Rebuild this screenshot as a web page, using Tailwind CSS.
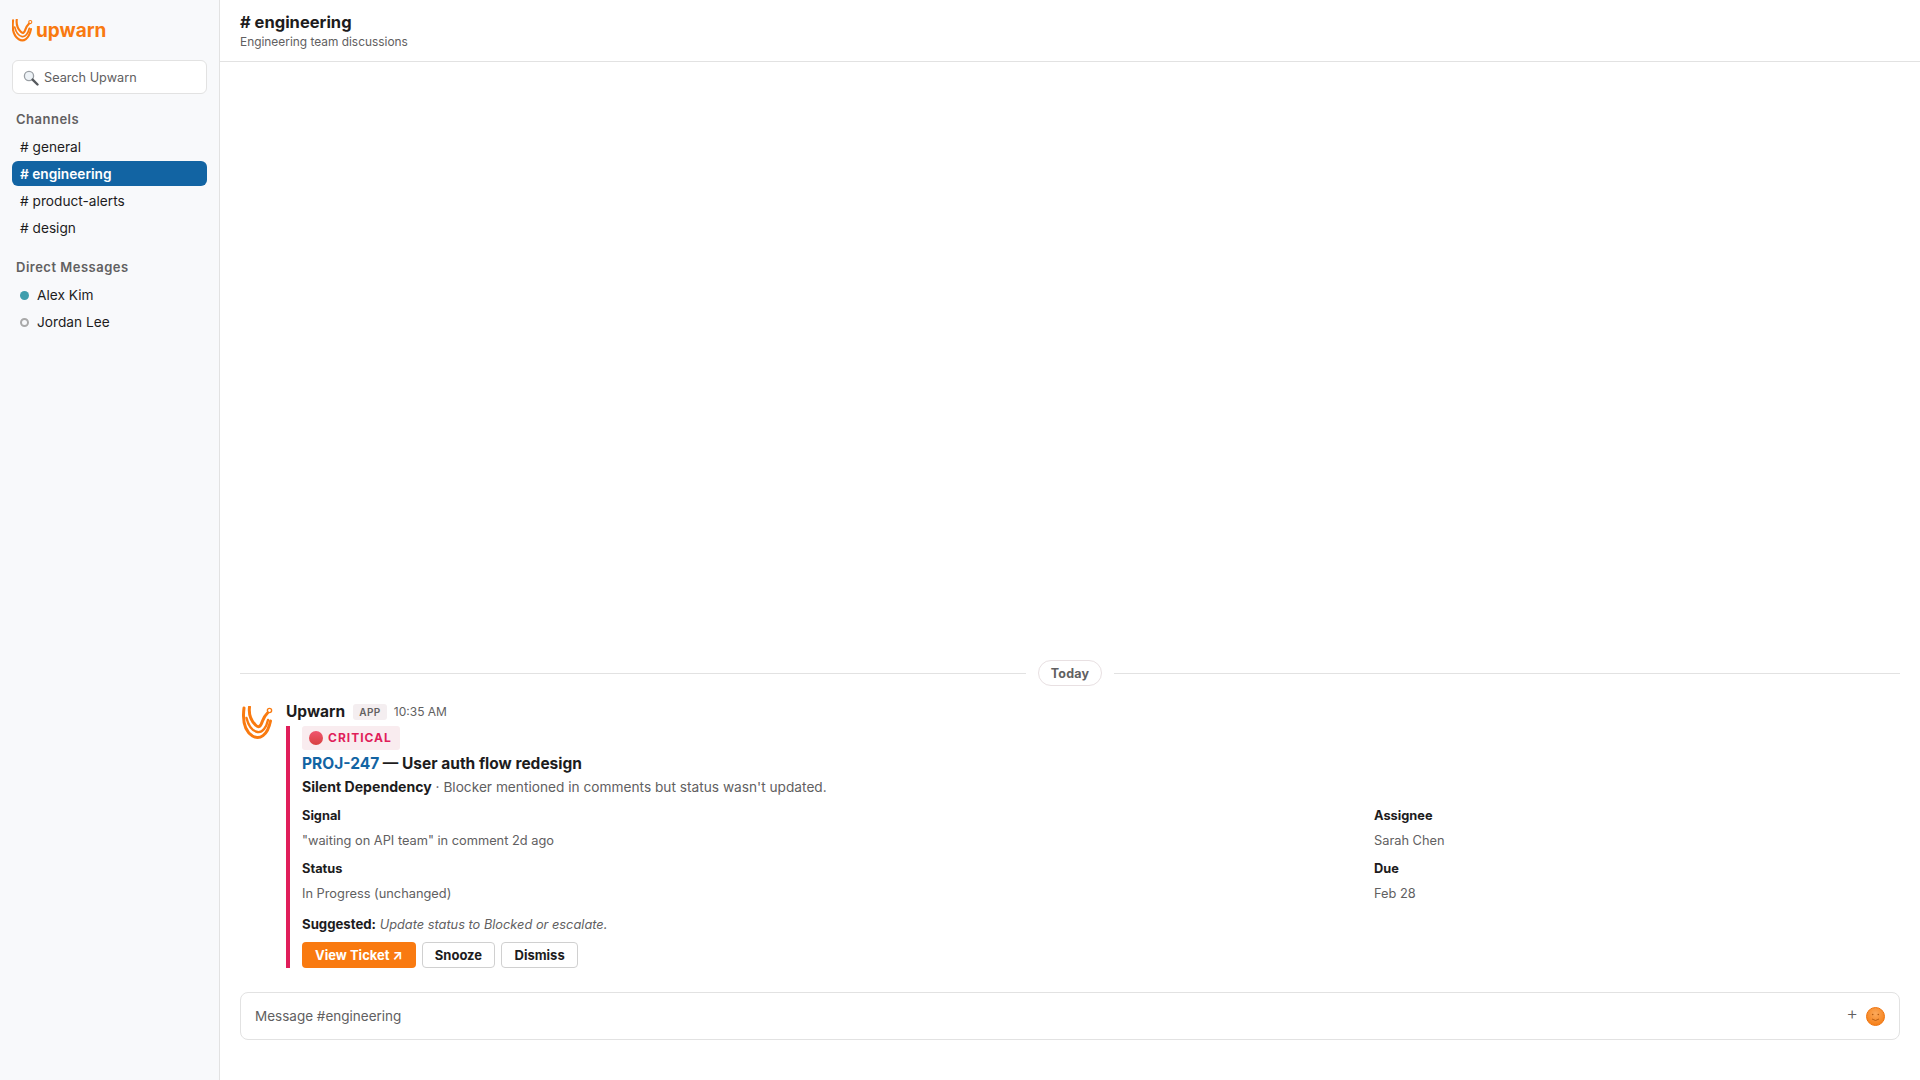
<!DOCTYPE html>
<html lang="en">
<head>
  <meta charset="UTF-8" />
  <title>Upwarn</title>
  <script src="https://cdn.jsdelivr.net/npm/@tailwindcss/browser@4"></script>
</head>
<body class="font-['Inter',sans-serif] bg-white text-[#1d1c1d]">
  <div class="flex h-[1080px] w-[1920px] overflow-hidden">

    <!-- sidebar -->
    <aside class="w-[220px] shrink-0 bg-[#f8f9fb] border-r border-[#e2e2e2] px-3">
      <div class="flex items-center gap-[3px] h-[60px]">
        <svg class="w-[21px] h-[23px]" viewBox="0 0 31 34" fill="none" stroke="#f97a10" stroke-linecap="round">
          <path d="M1.5 2 C0 14 2 25 10 30 C17 34 25 30 28 15" stroke-width="3.2"/>
          <path d="M7 1 C6 9 9 15 13 19 C16 22 18 21 20 15 C21 12 23 9 25 7" stroke-width="3.2"/>
          <path d="M4 12 C6 20 10 25 15 26 C20 27 24 21 25.5 14" stroke-width="2.6"/>
          <circle cx="27" cy="4.5" r="2.3" stroke-width="1.6"/>
        </svg>
        <span class="text-[19px] font-bold leading-none text-[#f97a10]">upwarn</span>
      </div>
      <div class="flex items-center h-[34px] bg-white border border-[#e2e2e2] rounded-md pl-[10px] pt-[1px] text-[12.7px] text-[#616061]">
        <svg class="w-[16px] h-[16px] mr-[5px]" viewBox="0 0 16 16" fill="none">
          <circle cx="6" cy="6" r="4.6" fill="#eef3f7" stroke="#9a9fa4" stroke-width="1.3"/>
          <path d="M9.6 9.6 L14.5 14.5" stroke="#55595d" stroke-width="2.4" stroke-linecap="round"/>
        </svg>
        Search Upwarn
      </div>
      <div class="mt-[17px] mb-[7px] px-1 text-[13px] leading-[16px] font-semibold tracking-[0.5px] text-[#616061]">Channels</div>
      <div class="flex flex-col gap-[2px] text-[13.7px] leading-[26px]">
        <div class="h-[25px] px-2 rounded-md"># general</div>
        <div class="h-[25px] px-2 rounded-md bg-[#1264a3] text-white font-semibold"># engineering</div>
        <div class="h-[25px] px-2 rounded-md"># product-alerts</div>
        <div class="h-[25px] px-2 rounded-md"># design</div>
      </div>
      <div class="mt-[19px] mb-[8px] px-1 text-[13px] leading-[16px] font-semibold tracking-[0.5px] text-[#616061]">Direct Messages</div>
      <div class="flex flex-col gap-[2px] text-[13.7px] leading-[25px]">
        <div class="flex items-center h-[25px] px-2"><span class="w-[9px] h-[9px] rounded-full bg-[#3f9ead] mr-2"></span>Alex Kim</div>
        <div class="flex items-center h-[25px] px-2"><span class="w-[9px] h-[9px] rounded-full border-2 border-[#a9a9a9] mr-2"></span>Jordan Lee</div>
      </div>
    </aside>

    <!-- main -->
    <main class="flex-1 flex flex-col min-w-0">
      <header class="h-[62px] shrink-0 border-b border-[#e2e2e2] px-5 pt-[12px]">
        <div class="text-[16.5px] leading-[20px] font-bold"># engineering</div>
        <div class="text-[11.9px] leading-[16px] mt-[2px] text-[#616061]">Engineering team discussions</div>
      </header>

      <div class="flex-1 flex flex-col justify-end px-5">
        <div class="flex items-center gap-3 mb-[14px]">
          <div class="flex-1 h-px bg-[#e2e2e2]"></div>
          <div class="h-[26px] px-3 rounded-full border border-[#e8e0e2] text-[12.5px] leading-[25px] font-bold tracking-[0.2px] text-[#616061]">Today</div>
          <div class="flex-1 h-px bg-[#e2e2e2]"></div>
        </div>

        <div class="flex gap-[10px]">
          <svg class="w-[36px] h-[36px] shrink-0 mt-[5px] py-[1px] px-[2px]" viewBox="0 0 31 34" fill="none" stroke="#f97a10" stroke-linecap="round">
            <path d="M1.5 2 C0 14 2 25 10 30 C17 34 25 30 28 15" stroke-width="3"/>
            <path d="M7 1 C6 9 9 15 13 19 C16 22 18 21 20 15 C21 12 23 9 25 7" stroke-width="3"/>
            <path d="M4 12 C6 20 10 25 15 26 C20 27 24 21 25.5 14" stroke-width="2.4"/>
            <circle cx="27" cy="4.5" r="2.1" stroke-width="1.4"/>
          </svg>
          <div class="flex-1 min-w-0">
            <div class="flex items-center h-[20px] mt-[2px] mb-[4px]">
              <span class="text-[15.5px] font-bold">Upwarn</span>
              <span class="ml-2 px-[6px] h-[16px] leading-[16px] rounded-[3px] bg-[#f4eef0] text-[10px] font-semibold tracking-[0.5px] text-[#616061]">APP</span>
              <span class="ml-[7px] text-[12px] text-[#616061]">10:35 AM</span>
            </div>
            <div class="border-l-4 border-[#e01e5a] pl-3">
              <div class="inline-flex items-center h-[24px] px-[7px] pr-[8px] rounded-[3px] bg-[#f9ecef] text-[12px] font-bold tracking-[1px] text-[#e01e5a]">
                <span class="w-[14px] h-[14px] rounded-full bg-linear-to-b from-[#f0566f] to-[#d8403f] mr-[5px]"></span>CRITICAL
              </div>
              <div class="text-[15.5px] leading-[20px] mt-[3px] font-bold"><span class="text-[#1264a3]">PROJ-247</span> — User auth flow redesign</div>
              <div class="text-[13.7px] leading-[20px] mt-[3px] text-[#616061]"><span class="text-[14.1px] font-bold text-[#1d1c1d]">Silent Dependency</span> · Blocker mentioned in comments but status wasn't updated.</div>
              <div class="grid grid-cols-[1072px_1fr] text-[12.8px] leading-[18px] mt-[10px]">
                <div class="font-bold">Signal</div>
                <div class="font-bold">Assignee</div>
                <div class="mt-[7px] text-[#616061]">"waiting on API team" in comment 2d ago</div>
                <div class="mt-[7px] text-[#616061]">Sarah Chen</div>
                <div class="mt-[10px] font-bold">Status</div>
                <div class="mt-[10px] font-bold">Due</div>
                <div class="mt-[7px] text-[#616061]">In Progress (unchanged)</div>
                <div class="mt-[7px] text-[#616061]">Feb 28</div>
              </div>
              <div class="text-[12.8px] leading-[18px] mt-[12px] text-[#616061]"><span class="text-[13.2px] font-bold text-[#1d1c1d]">Suggested:</span> <em>Update status to Blocked or escalate.</em></div>
              <div class="flex gap-[6px] mt-[8px] text-[13px] font-bold">
                <div class="h-[26px] px-[13px] leading-[26px] rounded-[4px] bg-[#f97a10] text-white">View Ticket ↗</div>
                <div class="h-[26px] px-[12px] leading-[24px] rounded-[4px] border border-[#d0d0d0]">Snooze</div>
                <div class="h-[26px] px-[12.5px] leading-[24px] rounded-[4px] border border-[#d0d0d0]">Dismiss</div>
              </div>
            </div>
          </div>
        </div>

        <div class="flex items-center h-[48px] mt-[24px] mb-[40px] pl-[14px] pr-[14px] pt-[1px] border border-[#e2e2e2] rounded-lg text-[13.5px] text-[#616061]">
          <span class="flex-1">Message #engineering</span>
          <span class="text-[18px] font-light leading-none text-[#616061] -mt-[6px] mr-[8px]">+</span>
          <svg class="w-[19px] h-[19px]" viewBox="0 0 19 19">
            <defs>
              <radialGradient id="face" cx="50%" cy="35%" r="65%">
                <stop offset="0%" stop-color="#fba95c"/>
                <stop offset="100%" stop-color="#f67f16"/>
              </radialGradient>
            </defs>
            <circle cx="9.5" cy="9.5" r="9" fill="url(#face)" stroke="#ee7410"/>
            <circle cx="6.7" cy="7.5" r="0.8" fill="#b25a12"/>
            <circle cx="12.3" cy="7.5" r="0.8" fill="#b25a12"/>
            <path d="M6 12 Q9.5 15 13 12" fill="none" stroke="#b25a12" stroke-width="0.9"/>
          </svg>
        </div>
      </div>
    </main>
  </div>
</body>
</html>
